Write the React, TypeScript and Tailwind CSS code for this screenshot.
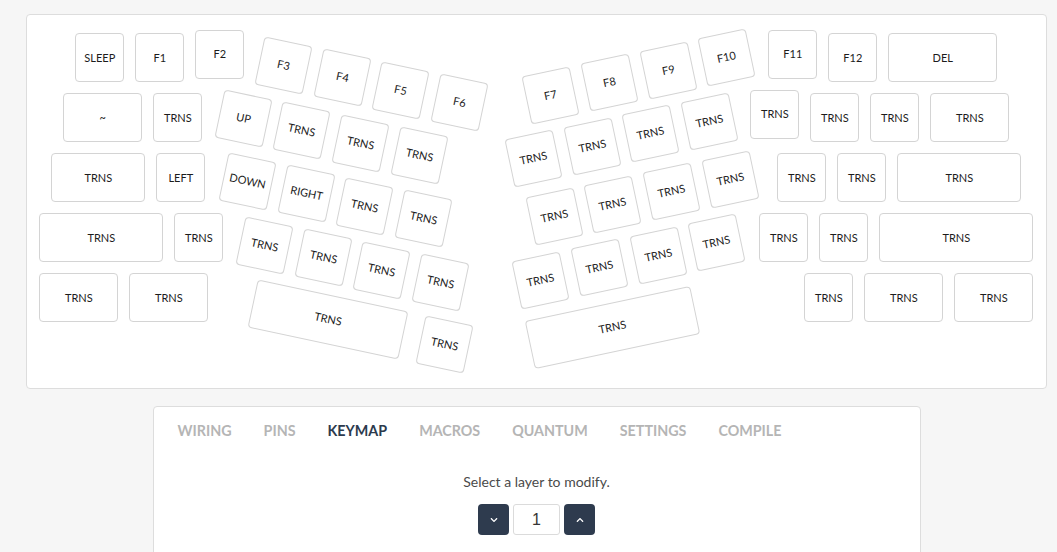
import { FaChevronDown, FaChevronUp } from "react-icons/fa";
import clsx from "clsx";

type FlatKey = { label: string; x: number; y: number; w?: number };
type TiltKey = { label: string; cx: number; cy: number; w?: number };

// 1u pitch on the canvas, keys are 11px narrower than their slot
const U = 60;
// top-left of the key canvas (inside the panel border), in page pixels
const OX = 27;
const OY = 15;
const STEP_X = 58.69;
const STEP_Y = 12.47;

const flatKeys: FlatKey[] = [
  // left half
  { label: "SLEEP", x: 75.3, y: 33.3 },
  { label: "F1", x: 135.3, y: 33.3 },
  { label: "F2", x: 195.3, y: 30 },
  { label: "~", x: 63.3, y: 93.3, w: 1.5 },
  { label: "TRNS", x: 153.3, y: 93.3 },
  { label: "TRNS", x: 51.3, y: 153.3, w: 1.75 },
  { label: "LEFT", x: 156.3, y: 153.3 },
  { label: "TRNS", x: 39.3, y: 213.3, w: 2.25 },
  { label: "TRNS", x: 174.3, y: 213.3 },
  { label: "TRNS", x: 39.3, y: 273.3, w: 1.5 },
  { label: "TRNS", x: 129.3, y: 273.3, w: 1.5 },
  // right half
  { label: "F11", x: 768.3, y: 30 },
  { label: "F12", x: 828.3, y: 33.3 },
  { label: "DEL", x: 888.3, y: 33.3, w: 2 },
  { label: "TRNS", x: 750.3, y: 90 },
  { label: "TRNS", x: 810.3, y: 93.3 },
  { label: "TRNS", x: 870.3, y: 93.3 },
  { label: "TRNS", x: 930.3, y: 93.3, w: 1.5 },
  { label: "TRNS", x: 777.3, y: 153.3 },
  { label: "TRNS", x: 837.3, y: 153.3 },
  { label: "TRNS", x: 897.3, y: 153.3, w: 2.25 },
  { label: "TRNS", x: 759.3, y: 213.3 },
  { label: "TRNS", x: 819.3, y: 213.3 },
  { label: "TRNS", x: 879.3, y: 213.3, w: 2.75 },
  { label: "TRNS", x: 804.3, y: 273.3 },
  { label: "TRNS", x: 864.3, y: 273.3, w: 1.5 },
  { label: "TRNS", x: 954.3, y: 273.3, w: 1.5 },
];

function tiltRow(labels: string[], cx: number, cy: number, dir: 1 | -1): TiltKey[] {
  return labels.map((label, i) => ({
    label,
    cx: cx + i * STEP_X,
    cy: cy + dir * i * STEP_Y,
  }));
}

const TR4 = ["TRNS", "TRNS", "TRNS", "TRNS"];

const leftThumb: TiltKey[] = [
  ...tiltRow(["F3", "F4", "F5", "F6"], 283.5, 65.2, 1),
  ...tiltRow(["UP", "TRNS", "TRNS", "TRNS"], 243.3, 118.3, 1),
  ...tiltRow(["DOWN", "RIGHT", "TRNS", "TRNS"], 247.5, 181.3, 1),
  ...tiltRow(TR4, 264.5, 245.4, 1),
  { label: "TRNS", cx: 327.5, cy: 319.6, w: 2.75 },
  { label: "TRNS", cx: 444.2, cy: 344.5 },
];

const rightThumb: TiltKey[] = [
  ...tiltRow(["F7", "F8", "F9", "F10"], 550.9, 95, -1),
  ...tiltRow(TR4, 533.5, 158.8, -1),
  ...tiltRow(TR4, 554.1, 216.6, -1),
  ...tiltRow(TR4, 540.7, 280.2, -1),
  { label: "TRNS", cx: 612.3, cy: 327.1, w: 3 },
];

const tabs = ["WIRING", "PINS", "KEYMAP", "MACROS", "QUANTUM", "SETTINGS", "COMPILE"];

function Key({
  label,
  left,
  top,
  width,
  tilt,
}: {
  label: string;
  left: number;
  top: number;
  width: number;
  tilt?: string;
}) {
  return (
    <div
      className={clsx(
        "absolute flex h-[49px] items-center justify-center rounded-[4px] border border-[#d4d4d4] bg-white text-[11px] text-[#1c1c1c]",
        tilt
      )}
      style={{ left, top, width }}
    >
      {label}
    </div>
  );
}

export default function App() {
  return (
    <div className="min-h-screen bg-[#f6f6f6] pt-[14px] font-['Lato',sans-serif]">
      <div className="ml-[26px] w-[1021px]">
        {/* Keyboard */}
        <div className="relative h-[375px] rounded-[4px] border border-[#dddddd] bg-white">
          {flatKeys.map((k, i) => (
            <Key
              key={"f" + i}
              label={k.label}
              left={k.x - OX}
              top={k.y - OY}
              width={(k.w ?? 1) * U - 11}
            />
          ))}
          {leftThumb.map((k, i) => {
            const width = (k.w ?? 1) * U - 11;
            return (
              <Key
                key={"l" + i}
                label={k.label}
                left={k.cx - width / 2 - OX}
                top={k.cy - 24.5 - OY}
                width={width}
                tilt="rotate-[12deg]"
              />
            );
          })}
          {rightThumb.map((k, i) => {
            const width = (k.w ?? 1) * U - 11;
            return (
              <Key
                key={"r" + i}
                label={k.label}
                left={k.cx - width / 2 - OX}
                top={k.cy - 24.5 - OY}
                width={width}
                tilt="rotate-[-12deg]"
              />
            );
          })}
        </div>

        {/* Tabs card */}
        <div className="mx-auto mt-[17px] min-h-[200px] w-[768px] rounded-[4px] border border-[#dddddd] bg-white">
          <nav className="flex gap-8 pl-[24px] pt-[15px] text-[14.3px] font-bold leading-[18px]">
            {tabs.map((t) => (
              <span key={t} className={t === "KEYMAP" ? "text-[#2c3a4d]" : "text-[#b5b5b5]"}>
                {t}
              </span>
            ))}
          </nav>
          <div className="mt-[32px] flex flex-col items-center">
            <p className="text-[14px] leading-[20px] text-[#4a4a4a]">Select a layer to modify.</p>
            <div className="mt-[12px] flex gap-[4px]">
              <button className="flex h-[31px] w-[31px] items-center justify-center rounded-[4px] bg-[#2e3b4e] text-white">
                <FaChevronDown size={8} />
              </button>
              <div className="flex h-[31px] w-[47px] items-center justify-center rounded-[3px] border border-[#dbdbdb] bg-white font-['Liberation_Sans',sans-serif] text-[16px] text-[#363636]">
                1
              </div>
              <button className="flex h-[31px] w-[31px] items-center justify-center rounded-[4px] bg-[#2e3b4e] text-white">
                <FaChevronUp size={8} />
              </button>
            </div>
          </div>
        </div>
      </div>
    </div>
  );
}
